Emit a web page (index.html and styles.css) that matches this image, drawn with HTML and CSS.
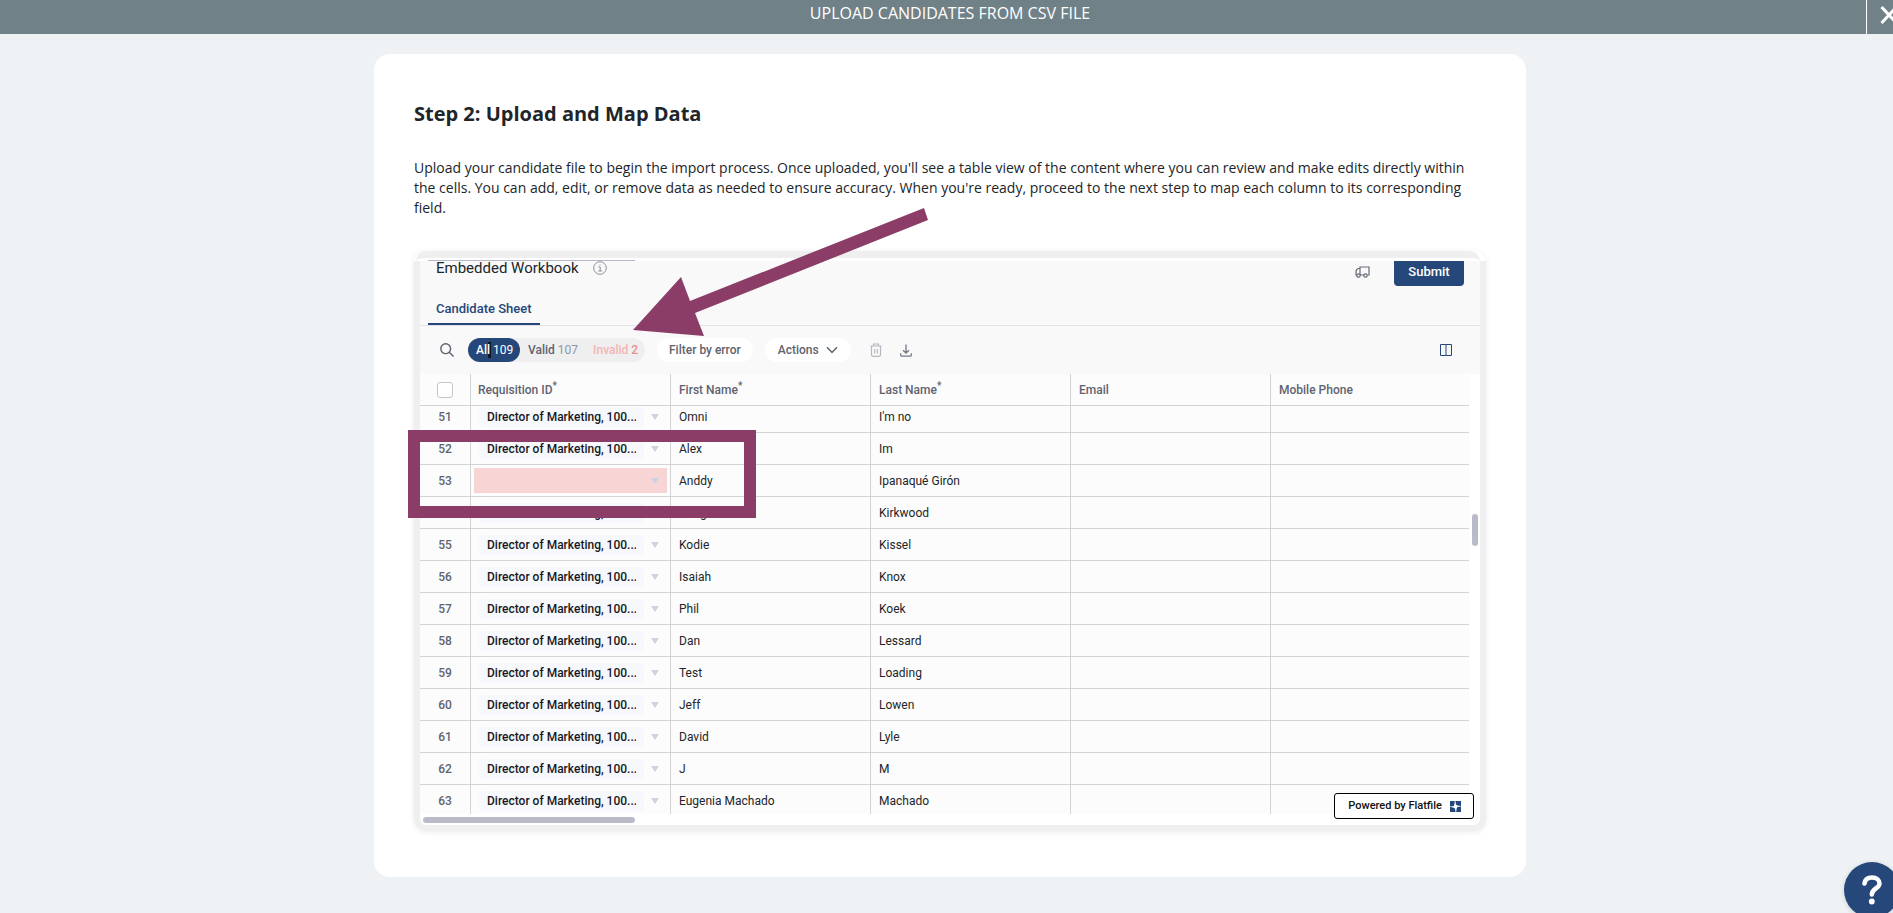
FILE: index.html
```html
<!DOCTYPE html>
<html lang="en">
<head>
	<meta charset="utf-8"/>
	<title>Upload candidates from CSV file</title>
	<link rel="stylesheet" href="styles.css">
</head>
<body>
<div class="page">

	<div class="topbar">
		<h1>UPLOAD CANDIDATES FROM CSV FILE</h1>
		<button class="close" type="button" aria-label="Close">
			<svg width="18" height="18" viewBox="0 0 18 18"><path d="M1.500 1L16.500 17M16.500 1L1.500 17" stroke="#fff" stroke-width="3" fill="none"/></svg>
		</button>
	</div>

	<div class="card">
		<h2>Step 2: Upload and Map Data</h2>
		<p>Upload your candidate file to begin the import process. Once uploaded, you'll see a table view of the content where you can review and make edits directly within the cells. You can add, edit, or remove data as needed to ensure accuracy. When you're ready, proceed to the next step to map each column to its corresponding field.</p>

		<div class="frame">
			<div class="frame-cap"></div>
			<div class="workbook">
				<div class="workbook-head">
					<h3>Embedded Workbook</h3>
					<svg class="info" width="14" height="14" viewBox="0 0 14 14" fill="none" stroke="#8b8f9c"><circle cx="7" cy="7" r="6.300"/><path d="M5.500 6H7.200V10M5.300 10H9M7 3.500V4.600"/></svg>
					<svg class="truck" width="15" height="12" viewBox="0 0 15 12" fill="none" stroke="#666a78" stroke-width="1.200"><path d="M5 9H9M5 9V1H14V9H12.500M5 2.500H3.500Q1 3 1 6V9H2"/><circle cx="3.500" cy="9.500" r="1.700"/><circle cx="10.500" cy="9.500" r="1.700"/></svg>
					<button class="submit" type="button">Submit</button>
				</div>
				<div class="tabs">
					<a class="tab" href="#candidates">Candidate Sheet</a>
				</div>

				<div class="toolbar">
					<button class="icon-btn search" type="button" aria-label="Search">
						<svg width="14" height="14" viewBox="0 0 14 14" fill="none" stroke="#5f6370" stroke-width="1.400"><circle cx="5.700" cy="5.700" r="4.900"/><path d="M9.300 9.300L13.500 13.500"/></svg>
					</button>
					<div class="filters">
						<button class="on" type="button">All<i class="caret"></i> <span>109</span></button>
						<button type="button">Valid <span>107</span></button>
						<button class="invalid" type="button">Invalid <span>2</span></button>
					</div>
					<button class="pill" type="button">Filter by error</button>
					<button class="pill actions" type="button">Actions <svg width="12" height="8" viewBox="0 0 12 8" fill="none" stroke="#5f6370" stroke-width="1.500"><path d="M1 1.200L6 6.500L11 1.200"/></svg></button>
					<button class="icon-btn" type="button" aria-label="Delete">
						<svg width="12" height="14" viewBox="0 0 12 14" fill="none" stroke="#b4b8c0" stroke-width="1.200"><path d="M0.500 3H11.500M3.500 3V1H8.500V3M1.500 3V12Q1.500 13.300 3 13.300H9Q10.500 13.300 10.500 12V3M4.700 6V10.500M7.300 6V10.500"/></svg>
					</button>
					<button class="icon-btn" type="button" aria-label="Download">
						<svg width="12" height="13" viewBox="0 0 12 13" fill="none" stroke="#737987" stroke-width="1.300"><path d="M6 0.500V9M3 6.200L6 9L9 6.200M0.700 9.300V11Q0.700 12.200 2 12.200H10Q11.300 12.200 11.300 11V9.300"/></svg>
					</button>
					<button class="icon-btn columns" type="button" aria-label="Columns">
						<svg width="12" height="12" viewBox="0 0 12 12" fill="none" stroke="#26477a"><path d="M0.500 0.500H11.500V11.500H0.500Z"/><path d="M6 1V11" stroke-width="2" stroke-opacity="0.500"/></svg>
					</button>
				</div>

				<div class="grid">
					<table>
						<thead>
							<tr>
								<th class="num"><input type="checkbox" aria-label="Select all rows"></th>
								<th>Requisition ID<sup>*</sup></th>
								<th>First Name<sup>*</sup></th>
								<th>Last Name<sup>*</sup></th>
								<th>Email</th>
								<th class="end">Mobile Phone</th>
							</tr>
						</thead>
						<tbody>
							<tr class="cut-top">
								<td class="num">51</td>
								<td><div class="req"><select aria-label="Requisition, row 51"><option>Director of Marketing, 100...</option></select></div></td>
								<td>Omni</td><td>I'm no</td><td></td><td></td>
							</tr>
							<tr>
								<td class="num">52</td>
								<td><div class="req"><select aria-label="Requisition, row 52"><option>Director of Marketing, 100...</option></select></div></td>
								<td>Alex</td><td>Im</td><td></td><td></td>
							</tr>
							<tr>
								<td class="num">53</td>
								<td class="error"><div class="req"><select aria-label="Requisition, row 53"><option></option></select></div></td>
								<td>Anddy</td><td>Ipanaqué Girón</td><td></td><td></td>
							</tr>
							<tr>
								<td class="num">54</td>
								<td><div class="req"><select aria-label="Requisition, row 54"><option>Director of Marketing, 100...</option></select></div></td>
								<td>Craig</td><td>Kirkwood</td><td></td><td></td>
							</tr>
							<tr>
								<td class="num">55</td>
								<td><div class="req"><select aria-label="Requisition, row 55"><option>Director of Marketing, 100...</option></select></div></td>
								<td>Kodie</td><td>Kissel</td><td></td><td></td>
							</tr>
							<tr>
								<td class="num">56</td>
								<td><div class="req"><select aria-label="Requisition, row 56"><option>Director of Marketing, 100...</option></select></div></td>
								<td>Isaiah</td><td>Knox</td><td></td><td></td>
							</tr>
							<tr>
								<td class="num">57</td>
								<td><div class="req"><select aria-label="Requisition, row 57"><option>Director of Marketing, 100...</option></select></div></td>
								<td>Phil</td><td>Koek</td><td></td><td></td>
							</tr>
							<tr>
								<td class="num">58</td>
								<td><div class="req"><select aria-label="Requisition, row 58"><option>Director of Marketing, 100...</option></select></div></td>
								<td>Dan</td><td>Lessard</td><td></td><td></td>
							</tr>
							<tr>
								<td class="num">59</td>
								<td><div class="req"><select aria-label="Requisition, row 59"><option>Director of Marketing, 100...</option></select></div></td>
								<td>Test</td><td>Loading</td><td></td><td></td>
							</tr>
							<tr>
								<td class="num">60</td>
								<td><div class="req"><select aria-label="Requisition, row 60"><option>Director of Marketing, 100...</option></select></div></td>
								<td>Jeff</td><td>Lowen</td><td></td><td></td>
							</tr>
							<tr>
								<td class="num">61</td>
								<td><div class="req"><select aria-label="Requisition, row 61"><option>Director of Marketing, 100...</option></select></div></td>
								<td>David</td><td>Lyle</td><td></td><td></td>
							</tr>
							<tr>
								<td class="num">62</td>
								<td><div class="req"><select aria-label="Requisition, row 62"><option>Director of Marketing, 100...</option></select></div></td>
								<td>J</td><td>M</td><td></td><td></td>
							</tr>
							<tr class="cut-bottom">
								<td class="num">63</td>
								<td><div class="req"><select aria-label="Requisition, row 63"><option>Director of Marketing, 100...</option></select></div></td>
								<td>Eugenia Machado</td><td>Machado</td><td></td><td></td>
							</tr>
						</tbody>
					</table>
					<div class="scroll-x"></div>
					<div class="scroll-y"></div>
					<a class="powered" href="#flatfile">Powered by Flatfile
						<svg width="11" height="11" viewBox="0 0 11 11"><path d="M0 0H11V11H0Z" fill="#26477a"/><path d="M4.800 0H5.400L6 3.500L7.500 4.600L11 5V5.600L7.300 6L6.500 8.200L6.200 11H5.600L5 7.500L3 6.500L0 6V5.400L3.500 5.200L4.300 3.800Z" fill="#fff"/></svg>
					</a>
				</div>
			</div>

			<!-- callouts drawn over the workbook -->
			<svg class="arrow" width="296" height="130" viewBox="0 0 296 130"><path d="M0 122L48 69L57 93L291 0L295 12L62 105L71 128Z" fill="#8b3d67"/></svg>
			<div class="highlight"></div>
		</div>
	</div>
</div>

<button class="help" type="button" aria-label="Help">
	<svg width="20" height="30" viewBox="0 0 20 30"><path d="M2.500 8.500C3 4.500 6 2.500 10 2.500C14.500 2.500 17.500 5 17.500 8.500C17.500 13.500 9.800 13.500 9.800 19.500" fill="none" stroke="#fff" stroke-width="4.500" stroke-linecap="round"/><circle cx="9.800" cy="26.500" r="2.900" fill="#fff"/></svg>
</button>
</body>
</html>
```
FILE: styles.css
```css
html {
	overflow: hidden;
}

body {
	background: #eef2f5;
	color: #212529;
	font: 14px/20px 'Open Sans', sans-serif;
	margin: 0;
}

/* the bar and card run slightly under the window's right edge */
.page {
	margin-right: -7px;
}

button,
input,
select {
	font: inherit;
	color: inherit;
	margin: 0;
	padding: 0;
	border: 0;
	background: none;
}

.topbar {
	position: relative;
	background: #708188;
	color: #fff;
	height: 34px;
}

h1 {
	font-size: 16px;
	font-weight: normal;
	line-height: 26px;
	text-align: center;
	margin: 0;
}

.close {
	position: absolute;
	top: 0;
	right: -11px;
	width: 45px;
	height: 34px;
	border-left: 1px solid #fff;
}

.close svg {
	display: block;
	margin: -4px auto 0;
}

.card {
	max-width: 1072px;
	margin: 20px auto;
	padding: 40px 40px 46px;
	background: #fff;
	border-radius: 16px;
}

h2 {
	font-size: 20px;
	line-height: 40px;
	margin: 0 0 24px;
}

p {
	margin: 0 0 33px;
}

.frame {
	position: relative;
	font: 12px/20px Roboto, sans-serif;
	border-radius: 12px;
	box-shadow: 0 1px 5px rgba(80, 80, 160, 0.12);
}

.frame-cap {
	height: 3px;
	margin: 0 6px 0 2px;
	border-top: 7px solid #efefef;
	border-radius: 10px 10px 0 0;
}

.workbook {
	border: 6px solid #efefef;
	border-top: 0;
	border-radius: 0 0 12px 12px;
	background: #f9f9f9;
}

.workbook-head {
	display: flex;
	align-items: flex-start;
	height: 34px;
	padding: 0 16px;
	position: relative;
}

.workbook-head::before {
	content: "";
	position: absolute;
	top: -1px;
	left: 8px;
	width: 207px;
	height: 1px;
	background: #b8b8cb;
}

h3 {
	font-size: 15px;
	font-weight: normal;
	line-height: 14px;
	margin: 0 14px 0 0;
}

.truck {
	margin: 5px 24px 0 auto;
}

.submit {
	width: 70px;
	height: 25px;
	background: #26477a;
	border-radius: 0 0 4px 4px;
	color: #fff;
	font-size: 13px;
	font-weight: 500;
	line-height: 21px;
	padding-bottom: 4px;
}

.tabs {
	display: flex;
	padding-left: 8px;
	border-bottom: 1px solid #e2e2e9;
}

.tab {
	padding: 4px 8px;
	font-size: 13px;
	font-weight: 500;
	line-height: 20px;
	color: #26477a;
	text-decoration: none;
	border-bottom: 2px solid #26477a;
}

.toolbar {
	display: flex;
	align-items: center;
	height: 48px;
	padding: 0 28px 0 20px;
	color: #5f6370;
	font-weight: 500;
}

.icon-btn {
	display: flex;
	margin-right: 18px;
}

.search {
	margin-right: 14px;
}

.columns {
	margin: 0 0 0 auto;
}

.filters {
	display: flex;
	width: 177px;
	margin-right: 12px;
	background: #efefef;
	border-radius: 12px;
}

.filters button {
	height: 24px;
	padding: 0 7px 0 8px;
	white-space: nowrap;
}

.filters span {
	font-weight: 400;
	color: #9095a8;
}

.filters .on,
.filters .on span {
	color: #fff;
}

.filters .on {
	position: relative;
	z-index: 0;
	width: 52px;
	background: #26477a;
	border-radius: 12px;
}

.filters .invalid {
	color: #f3b5b3;
}

.filters .invalid span {
	color: #e98e8b;
	font-weight: 500;
}

.caret {
	position: absolute;
	z-index: -1;
	top: 4px;
	left: 20px;
	width: 3px;
	height: 16px;
	background: #111820;
}

.pill {
	height: 24px;
	padding: 0 12px;
	margin-right: 12px;
	background: #fff;
	border-radius: 12px;
}

.actions {
	padding: 0 13px;
	margin-right: 19px;
}

.actions svg {
	margin-left: 4px;
}

.grid {
	position: relative;
	padding: 0 11px 11px 0;
	background: #fff;
	border-radius: 0 0 8px 8px;
}

table {
	width: 100%;
	table-layout: fixed;
	border-collapse: separate;
	border-spacing: 0;
	background: #fcfcfc;
}

th,
td {
	box-sizing: border-box;
	width: 200px;
	height: 32px;
	padding: 0 8px 5px;
	border: solid #d2d3d5;
	border-width: 0 1px 1px 0;
	text-align: left;
	vertical-align: bottom;
	white-space: nowrap;
}

th {
	color: #5f6370;
	font-weight: 500;
}

th.end {
	width: auto;
}

th:last-child,
td:last-child {
	border-right: 0;
}

th:nth-child(2) {
	padding-left: 7px;
}

sup {
	font-size: 10px;
	line-height: 0;
}

.num {
	width: 51px;
	padding-left: 0;
	padding-right: 0;
	text-align: center;
	color: #5f6370;
	font-weight: 500;
}

th.num {
	vertical-align: middle;
	padding: 0;
}

input[type=checkbox] {
	appearance: none;
	display: block;
	width: 16px;
	height: 16px;
	margin: 0 auto;
	background: #fff;
	border: 1px solid #c4c6ca;
	border-radius: 3px;
}

.cut-top td {
	height: 27px;
}

.cut-bottom td {
	height: 29px;
	padding-bottom: 3px;
	border-bottom: 0;
}

.req {
	display: flex;
	align-items: center;
}

.req::after {
	content: "";
	margin-left: 7px;
	border: solid transparent;
	border-width: 6px 4px 0;
	border-top-color: #cbd2e0;
}

.req select {
	appearance: none;
	width: 165px;
	height: 20px;
	padding: 0 8px;
	background: #f7f8fc;
	border-radius: 4px;
	font-weight: 500;
	color: #16181d;
}

td.error {
	padding: 3px;
}

.error .req {
	height: 25px;
	padding-left: 5px;
	background: #f6d5d4;
}

.error .req select {
	background: none;
}

.scroll-x,
.scroll-y {
	position: absolute;
	background: #babbc8;
	border-radius: 3px;
}

.scroll-x {
	left: 3px;
	bottom: 2px;
	width: 20%;
	height: 6px;
}

.scroll-y {
	top: 140px;
	right: 2px;
	width: 6px;
	height: 32px;
}

.powered {
	position: absolute;
	right: 6px;
	bottom: 6px;
	display: flex;
	align-items: center;
	gap: 8px;
	padding: 2px 12px 2px 13px;
	background: #fff;
	border: 1px solid #000;
	border-radius: 3px;
	color: #111;
	font-size: 11px;
	font-weight: 500;
	text-decoration: none;
}

.arrow {
	position: absolute;
	top: -43px;
	left: 219px;
}

.highlight {
	position: absolute;
	top: 179px;
	left: -6px;
	width: 324px;
	height: 64px;
	border: 12px solid #8b3d67;
}

.help {
	position: fixed;
	right: -7px;
	bottom: -5px;
	width: 56px;
	height: 56px;
	display: flex;
	align-items: center;
	justify-content: center;
	background: #26477a;
	border-radius: 50%;
	box-shadow: 0 1px 5px rgba(0, 0, 0, 0.15);
}
```
